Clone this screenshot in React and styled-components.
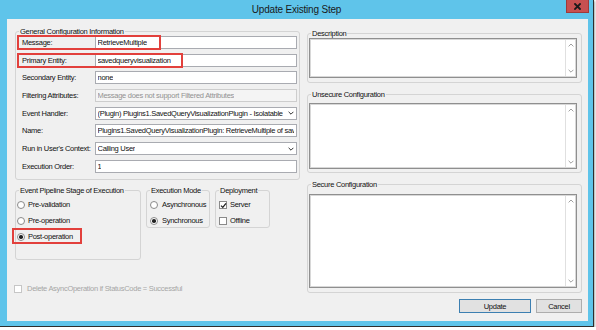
import React from 'react';
import styled, { createGlobalStyle, css } from 'styled-components';

const GlobalStyle = createGlobalStyle`
  html, body { margin: 0; padding: 0; background: #ffffff; }
  body { font-family: "Liberation Sans", Arial, sans-serif; }
  * { box-sizing: border-box; }
`;

const uiText = css`
  font-family: "Liberation Sans", Arial, sans-serif;
  font-size: 7.5px;
  letter-spacing: -0.28px;
  line-height: 9px;
  color: #111111;
  white-space: nowrap;
`;

const Window = styled.div`
  width: 594px;
  height: 327px;
  background: #5fc4ea;
  border-right: 1px solid #2e2e2e;
  border-bottom: 1px solid #2e2e2e;
  box-shadow: 1px 1px 2px rgba(0, 0, 0, 0.35);
  display: flex;
  flex-direction: column;
`;

const TitleBar = styled.div`
  height: 19px;
  flex-shrink: 0;
  display: grid;
  grid-template-columns: 1fr auto 1fr;
  align-items: start;
`;

const Title = styled.div`
  grid-column: 2;
  font-family: "Liberation Sans", Arial, sans-serif;
  font-size: 10px;
  letter-spacing: -0.2px;
  line-height: 20px;
  color: #1a1a1a;
`;

const CloseButton = styled.div`
  grid-column: 3;
  justify-self: end;
  margin-right: 4px;
  width: 23px;
  height: 13px;
  background: #c75050;
  border: 1px solid #9e3a3a;
  border-top: none;
  display: grid;
  place-items: center;
`;

const Client = styled.div`
  flex: 1;
  margin: 0 5px 5px 7px;
  background: #f0f0f0;
  display: flex;
  gap: 7px;
  padding: 8px 0 0 8px;
`;

const LeftCol = styled.div`
  width: 285px;
  flex-shrink: 0;
  display: flex;
  flex-direction: column;
`;

const RightCol = styled.div`
  width: 275px;
  flex-shrink: 0;
  margin-top: 1.5px;
  display: flex;
  flex-direction: column;
`;

const Group = styled.fieldset`
  margin: ${(p) => p.$mt || 0}px 0 0 0;
  min-width: 0;
  width: ${(p) => p.$w}px;
  border: 1px solid #d4d4d4;
  border-radius: 3px;
  padding: ${(p) => p.$pt || 0}px ${(p) => p.$pr || 0}px ${(p) => p.$pb || 0}px
    ${(p) => p.$pl || 0}px;
  & > legend {
    margin-left: ${(p) => 3 - (p.$pl || 0)}px;
  }
`;

const GroupTitle = styled.legend`
  ${uiText};
  padding: 0 1px;
`;

const FormGrid = styled.div`
  position: relative;
  display: grid;
  grid-template-columns: 73px 202px;
  grid-auto-rows: 13px;
  row-gap: 4.7px;
  align-items: center;
`;

const Label = styled.span`
  ${uiText};
`;

const Field = styled.div`
  ${uiText};
  height: 13px;
  border: 1px solid ${(p) => (p.$disabled ? '#cdcdcd' : '#a9abb1')};
  background: ${(p) => (p.$disabled ? '#f4f4f4' : '#ffffff')};
  color: ${(p) => (p.$disabled ? '#929292' : '#111111')};
  padding: 0 2px 0 1.5px;
  display: flex;
  align-items: center;
  justify-content: space-between;
  gap: 2px;
  overflow: hidden;
`;

const FieldText = styled.span`
  overflow: hidden;
`;

const Highlight = styled.div`
  position: absolute;
  left: ${(p) => p.$x}px;
  top: ${(p) => p.$y}px;
  width: ${(p) => p.$w}px;
  height: ${(p) => p.$h}px;
  border: 2px solid #e2403c;
  pointer-events: none;
`;

const StageRow = styled.div`
  display: flex;
  align-items: flex-start;
  gap: 5px;
  margin-top: 6.5px;
`;

const OptionList = styled.div`
  display: flex;
  flex-direction: column;
  gap: 5px;
`;

const Option = styled.div`
  position: relative;
  height: 11px;
  display: flex;
  align-items: center;
  gap: ${(p) => p.$gap}px;
  ${uiText};
  color: ${(p) => (p.$disabled ? '#a6a6a6' : '#111111')};
`;

const Radio = styled.span`
  width: 8px;
  height: 8px;
  flex-shrink: 0;
  border-radius: 50%;
  border: 1px solid #8a8a8a;
  background: #ffffff;
  display: grid;
  place-items: center;
  &::after {
    content: '';
    width: 3.5px;
    height: 3.5px;
    border-radius: 50%;
    background: ${(p) => (p.$on ? '#222222' : 'transparent')};
  }
`;

const Box = styled.span`
  width: 8px;
  height: 8px;
  flex-shrink: 0;
  border: 1px solid ${(p) => (p.$disabled ? '#c6c6c6' : '#8a8a8a')};
  background: #ffffff;
  display: grid;
  place-items: center;
  margin-left: ${(p) => p.$ml || 0}px;
`;

const DeleteRow = styled.div`
  margin-top: 23.5px;
`;

const TextArea = styled.div`
  height: ${(p) => p.$h}px;
  background: #ffffff;
  border: 1px solid #8f8f8f;
  box-shadow: inset 0 0 0 1px #d8d8d8;
  display: flex;
  justify-content: flex-end;
`;

const Scrollbar = styled.div`
  width: 10px;
  margin: 1px 1px 1px 0;
  border-left: 1px solid #e0e0e0;
  background: #ffffff;
  display: flex;
  flex-direction: column;
  justify-content: space-between;
  align-items: center;
  padding: 3px 0;
`;

const ButtonRow = styled.div`
  display: flex;
  justify-content: flex-end;
  gap: 5px;
  margin-top: 5.7px;
`;

const Button = styled.div`
  ${uiText};
  width: ${(p) => p.$w}px;
  height: 14px;
  background: #e1e1e1;
  border: 1px solid ${(p) => (p.$primary ? '#3c7fb1' : '#adadad')};
  display: grid;
  place-items: center;
`;

const Chevron = ({ up, color = '#a0a0a0', w = 6 }) => (
  <svg width={w} height="4" viewBox="0 0 6 4" style={{ flexShrink: 0 }}>
    <polyline
      points={up ? '0.6,3.4 3,1 5.4,3.4' : '0.6,0.8 3,3.2 5.4,0.8'}
      fill="none"
      stroke={color}
      strokeWidth="1"
    />
  </svg>
);

const Check = () => (
  <svg width="7" height="7" viewBox="0 0 7 7">
    <polyline points="1,3.6 2.8,5.4 6,1.4" fill="none" stroke="#1f1f1f" strokeWidth="1.3" />
  </svg>
);

const CloseGlyph = () => (
  <svg width="7" height="7" viewBox="0 0 7 7">
    <path d="M1 1 L6 6 M6 1 L1 6" stroke="#1a1a1a" strokeWidth="1.8" strokeLinecap="square" />
  </svg>
);

const fields = [
  { label: 'Message:', value: 'RetrieveMultiple' },
  { label: 'Primary Entity:', value: 'savedqueryvisualization' },
  { label: 'Secondary Entity:', value: 'none' },
  { label: 'Filtering Attributes:', value: 'Message does not support Filtered Attributes', disabled: true },
  { label: 'Event Handler:', value: '(Plugin) Plugins1.SavedQueryVisualizationPlugin - Isolatable', combo: true },
  { label: 'Name:', value: 'Plugins1.SavedQueryVisualizationPlugin: RetrieveMultiple of savedqueryvisualization' },
  { label: "Run in User's Context:", value: 'Calling User', combo: true },
  { label: 'Execution Order:', value: '1' },
];

const ConfigGroup = ({ title, mt, pt, pb, h }) => (
  <Group $w={275} $mt={mt} $pt={pt} $pr={4} $pb={pb} $pl={1}>
    <GroupTitle>{title}</GroupTitle>
    <TextArea $h={h}>
      <Scrollbar>
        <Chevron up />
        <Chevron />
      </Scrollbar>
    </TextArea>
  </Group>
);

export default function App() {
  return (
    <>
      <GlobalStyle />
      <Window>
        <TitleBar>
          <Title>Update Existing Step</Title>
          <CloseButton>
            <CloseGlyph />
          </CloseButton>
        </TitleBar>
        <Client>
          <LeftCol>
            <Group $w={285} $pt={0} $pr={2} $pb={6} $pl={6}>
              <GroupTitle>General Configuration Information</GroupTitle>
              <FormGrid>
                {fields.map((f) => (
                  <React.Fragment key={f.label}>
                    <Label>{f.label}</Label>
                    <Field $disabled={f.disabled}>
                      <FieldText>{f.value}</FieldText>
                      {f.combo && <Chevron color="#333333" />}
                    </Field>
                  </React.Fragment>
                ))}
                <Highlight $x={-5} $y={-1} $w={144} $h={15} />
                <Highlight $x={-5} $y={16.5} $w={166} $h={15} />
              </FormGrid>
            </Group>
            <StageRow>
              <Group $w={126} $pt={4} $pb={16.5} $pl={1}>
                <GroupTitle>Event Pipeline Stage of Execution</GroupTitle>
                <OptionList>
                  <Option $gap={3}>
                    <Radio />
                    Pre-validation
                  </Option>
                  <Option $gap={3}>
                    <Radio />
                    Pre-operation
                  </Option>
                  <Option $gap={3}>
                    <Radio $on />
                    Post-operation
                    <Highlight $x={-5} $y={-3.5} $w={70} $h={16} />
                  </Option>
                </OptionList>
              </Group>
              <Group $w={64} $pt={4} $pb={0.5} $pl={3}>
                <GroupTitle>Execution Mode</GroupTitle>
                <OptionList>
                  <Option $gap={4}>
                    <Radio />
                    Asynchronous
                  </Option>
                  <Option $gap={4}>
                    <Radio $on />
                    Synchronous
                  </Option>
                </OptionList>
              </Group>
              <Group $w={55} $pt={4} $pb={0.5} $pl={3}>
                <GroupTitle>Deployment</GroupTitle>
                <OptionList>
                  <Option $gap={3}>
                    <Box>
                      <Check />
                    </Box>
                    Server
                  </Option>
                  <Option $gap={3}>
                    <Box />
                    Offline
                  </Option>
                </OptionList>
              </Group>
            </StageRow>
            <DeleteRow>
              <Option $gap={5} $disabled>
                <Box $disabled $ml={-1} />
                Delete AsyncOperation if StatusCode = Successful
              </Option>
            </DeleteRow>
          </LeftCol>
          <RightCol>
            <ConfigGroup title="Description" pt={0.2} pb={3.5} h={40.6} />
            <ConfigGroup title="Unsecure Configuration" mt={7.3} pt={4} pb={3} h={66.3} />
            <ConfigGroup title="Secure Configuration" mt={6.7} pt={5} pb={4} h={94.3} />
            <ButtonRow>
              <Button $w={72} $primary>Update</Button>
              <Button $w={46}>Cancel</Button>
            </ButtonRow>
          </RightCol>
        </Client>
      </Window>
    </>
  );
}
